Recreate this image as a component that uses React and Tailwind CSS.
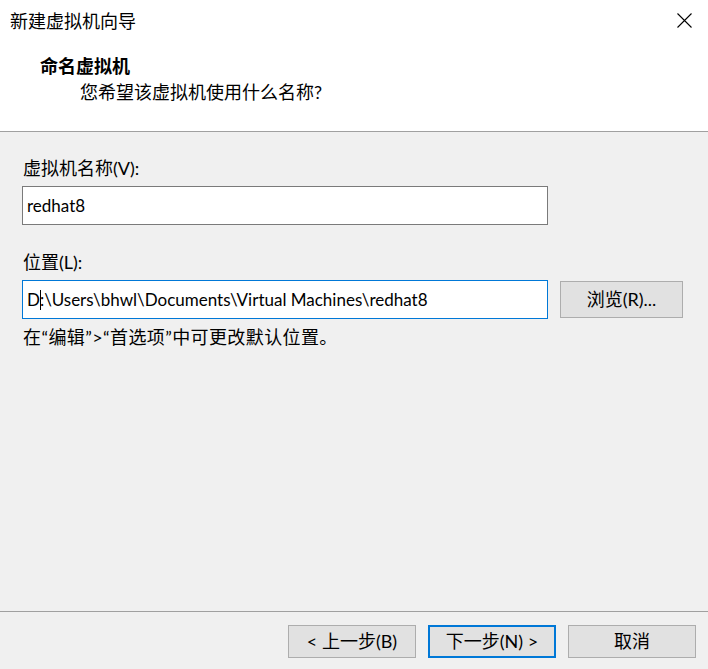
// App.jsx
// "新建虚拟机向导" wizard page: name the virtual machine

import React from 'react';

const font = { fontFamily: '"Segoe UI", Lato, "Noto Sans CJK SC", sans-serif' };

const WizardButton = ({ children, primary }) => (
  <button
    className={`w-[128px] h-[33px] inline-flex items-center justify-center bg-[#e1e1e1] text-[18px] text-black ${
      primary ? 'border-2 border-[#0078d7]' : 'border border-[#adadad]'
    }`}
  >
    {children}
  </button>
);

const App = () => {
  return (
    <div className="w-[708px] h-[669px] flex flex-col bg-[#f0f0f0] text-black overflow-hidden" style={font}>
      {/* Header */}
      <div className="h-[132px] bg-white border-b border-[#a0a0a0] flex flex-col">
        <div className="flex items-start justify-between">
          <div className="pt-[9px] pl-[10px] text-[18px] leading-[24px]">新建虚拟机向导</div>
          <button className="mt-[13px] mr-[16px] w-[15px] h-[15px]">
            <svg viewBox="0 0 15 15" width="15" height="15">
              <path d="M0.5 0.5 L14.5 14.5 M14.5 0.5 L0.5 14.5" stroke="#000" strokeWidth="1.1" fill="none" />
            </svg>
          </button>
        </div>
        <div className="pl-[40px] mt-[21px] text-[18px] leading-[24px] font-bold">命名虚拟机</div>
        <div className="pl-[80px] mt-[2px] text-[18px] leading-[24px]">您希望该虚拟机使用什么名称?</div>
      </div>

      {/* Body */}
      <div className="flex-1 flex flex-col pl-[22px]">
        <div className="mt-[24px] pl-[1px] text-[18px] leading-[24px]">虚拟机名称(V):</div>
        <div className="mt-[6px] w-[526px] h-[39px] bg-white border border-[#7a7a7a] flex items-center pl-[4px] text-[17px]">
          redhat8
        </div>

        <div className="mt-[25px] pl-[1px] text-[18px] leading-[24px]">位置(L):</div>
        <div className="mt-[6px] flex items-center gap-[12px]">
          <div className="w-[526px] h-[39px] bg-white border border-[#0078d7] flex items-center pl-[4px] text-[17px] whitespace-nowrap">
            D<span className="relative inline-block w-0 h-[20px] align-middle">
              <span className="absolute left-0 top-0 w-px h-[20px] bg-black"></span>
            </span>:\Users\bhwl\Documents\Virtual Machines\redhat8
          </div>
          <button className="w-[123px] h-[37px] bg-[#e1e1e1] border border-[#adadad] text-[18px] inline-flex items-center justify-center">
            浏览(R)...
          </button>
        </div>

        <div className="mt-[6px] pl-[1px] text-[18px] leading-[24px] tracking-[0.4px]">在“编辑”&gt;“首选项”中可更改默认位置。</div>
      </div>

      {/* Footer */}
      <div className="h-[58px] border-t border-[#a0a0a0] flex items-start justify-end gap-[12px] pt-[13px] pr-[12px]">
        <WizardButton>&lt; 上一步(B)</WizardButton>
        <WizardButton primary>下一步(N) &gt;</WizardButton>
        <WizardButton>取消</WizardButton>
      </div>
    </div>
  );
};

export default App;
